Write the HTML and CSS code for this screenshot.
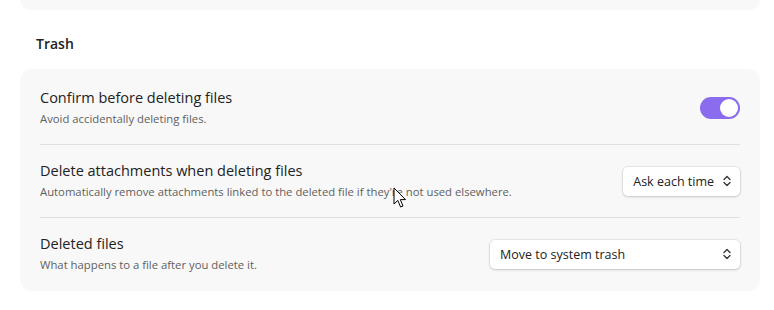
FILE: index.html
```html
<!DOCTYPE html>
<html>
<head>
<meta charset="utf-8">
<link rel="stylesheet" href="styles.css">
</head>
<body>
<div class="page">
  <div class="group-prev"></div>
  <div class="heading">Trash</div>
  <div class="group">
    <div class="item">
      <div class="info">
        <div class="name">Confirm before deleting files</div>
        <div class="desc">Avoid accidentally deleting files.</div>
      </div>
      <div class="control">
        <div class="toggle"><div class="knob"></div></div>
      </div>
    </div>
    <div class="item">
      <div class="info">
        <div class="name">Delete attachments when deleting files</div>
        <div class="desc">Automatically remove attachments linked to the deleted file if they're not used elsewhere.</div>
      </div>
      <div class="control">
        <div class="dropdown"><span>Ask each time</span>
          <svg class="chev" width="10" height="12" viewBox="0 0 10 12"><path d="M2 4.5 L5 1.5 L8 4.5 M2 7.5 L5 10.5 L8 7.5" fill="none" stroke="#333" stroke-width="1.3" stroke-linecap="round" stroke-linejoin="round"/></svg>
        </div>
      </div>
    </div>
    <div class="item">
      <div class="info">
        <div class="name">Deleted files</div>
        <div class="desc">What happens to a file after you delete it.</div>
      </div>
      <div class="control">
        <div class="dropdown wide"><span>Move to system trash</span>
          <svg class="chev" width="10" height="12" viewBox="0 0 10 12"><path d="M2 4.5 L5 1.5 L8 4.5 M2 7.5 L5 10.5 L8 7.5" fill="none" stroke="#333" stroke-width="1.3" stroke-linecap="round" stroke-linejoin="round"/></svg>
        </div>
      </div>
    </div>
  </div>
  <svg class="cursor" width="14" height="22" viewBox="0 0 14 22"><path d="M1 1 L1 17 L4.8 13.4 L7.6 20 L10 19 L7.3 12.6 L12.5 12.6 Z" fill="#fff" stroke="#000" stroke-width="1" stroke-linejoin="miter"/></svg>
</div>
</body>
</html>
```

FILE: styles.css
```css
* { box-sizing: border-box; }
html, body { margin: 0; padding: 0; background: #ffffff; }
body {
  font-family: "Open Sans", "Noto Sans", sans-serif;
  color: #222222;
  width: 774px;
  height: 310px;
  overflow: hidden;
}
.page {
  position: relative;
  padding: 0 14px 0 20px;
}
.group-prev {
  height: 10px;
  background: #f8f8f8;
  border-radius: 0 0 12px 12px;
}
.group {
  background: #f8f8f8;
  border-radius: 12px;
  padding: 3px 20px 1px;
}
.heading {
  font-size: 14px;
  font-weight: 600;
  line-height: 20px;
  padding: 24px 16px 0;
  height: 59px;
  color: #222;
}
.item {
  display: flex;
  align-items: center;
  min-height: 72px;
  padding: 16px 0;
  border-top: 1px solid #e0e0e0;
}
.item:first-child { border-top: none; }
.info { flex: 1; }
.name {
  font-size: 14.5px;
  line-height: 20px;
  color: #222;
}
.desc {
  font-size: 11.3px;
  line-height: 18px;
  color: #5f5f5f;
  margin-top: 2px;
}
.control { display: flex; align-items: center; }
.toggle {
  width: 40px;
  height: 22px;
  border-radius: 11px;
  background: #8a6cef;
  display: flex;
  justify-content: flex-end;
  align-items: center;
  padding: 2px;
}
.knob {
  width: 18px;
  height: 18px;
  border-radius: 50%;
  background: #fff;
}
.dropdown {
  display: flex;
  align-items: center;
  justify-content: space-between;
  gap: 8px;
  height: 29px;
  padding: 0 8px 0 10px;
  background: #fff;
  border-radius: 5px;
  box-shadow: 0 0 0 1px rgba(0,0,0,0.06), 0 1px 3px rgba(0,0,0,0.15);
  font-size: 12.5px;
  color: #222;
}
.dropdown.wide { width: 250px; }
.chev { flex: none; }
.cursor {
  position: absolute;
  left: 393px;
  top: 187px;
}
```
